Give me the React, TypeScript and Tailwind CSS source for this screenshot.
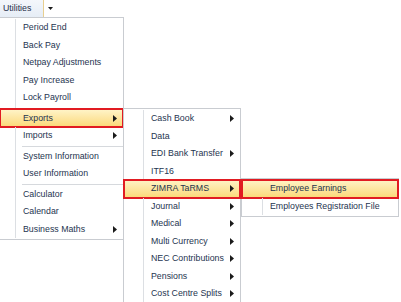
type Item = {
  label: string;
  arrow?: boolean;
  active?: boolean;
  sep?: boolean;
};

type MenuProps = {
  items: Item[];
  className: string;
  gutter: string;
};

const mainItems: Item[] = [
  { label: 'Period End' },
  { label: 'Back Pay' },
  { label: 'Netpay Adjustments' },
  { label: 'Pay Increase' },
  { label: 'Lock Payroll' },
  { label: '', sep: true },
  { label: 'Exports', arrow: true, active: true },
  { label: 'Imports', arrow: true },
  { label: '', sep: true },
  { label: 'System Information' },
  { label: 'User Information' },
  { label: '', sep: true },
  { label: 'Calculator' },
  { label: 'Calendar' },
  { label: 'Business Maths', arrow: true },
];

const exportItems: Item[] = [
  { label: 'Cash Book', arrow: true },
  { label: 'Data' },
  { label: 'EDI Bank Transfer', arrow: true },
  { label: 'ITF16' },
  { label: 'ZIMRA TaRMS', arrow: true, active: true },
  { label: 'Journal', arrow: true },
  { label: 'Medical', arrow: true },
  { label: 'Multi Currency', arrow: true },
  { label: 'NEC Contributions', arrow: true },
  { label: 'Pensions', arrow: true },
  { label: 'Cost Centre Splits', arrow: true },
];

const tarmsItems: Item[] = [
  { label: 'Employee Earnings', active: true },
  { label: 'Employees Registration File' },
];

function Arrow() {
  return (
    <svg width="4" height="7" viewBox="0 0 4 7" className="shrink-0">
      <polygon points="0,0 4,3.5 0,7" fill="#1b1b1b" />
    </svg>
  );
}

function Menu({ items, className, gutter }: MenuProps) {
  return (
    <div className={`absolute border border-[#c9ccd1] bg-white py-px ${className}`}>
      {items.map((item, i) => {
        if (item.sep) {
          return (
            <div key={i} className="flex h-[3px]">
              <div className={`${gutter} shrink-0 border-r border-[#dcdfe3]`} />
              <div className="flex flex-1 items-center pl-[6px]">
                <div className="h-px w-full bg-[#d6d9dd]" />
              </div>
            </div>
          );
        }
        return (
          <div
            key={i}
            className={`relative flex h-[17.5px] items-center ${
              item.active ? 'bg-gradient-to-b from-[#fff3c6] to-[#fbd875]' : ''
            }`}
          >
            <div
              className={`${gutter} h-full shrink-0 border-r ${
                item.active ? 'border-transparent' : 'border-[#dcdfe3]'
              }`}
            />
            <span className="flex-1 pl-[7px] whitespace-nowrap text-[#25344f]">{item.label}</span>
            {item.arrow && (
              <div className="pr-[6px]">
                <Arrow />
              </div>
            )}
            {item.active && (
              <div className="absolute -inset-x-px -top-[1.5px] -bottom-px border-2 border-[#e11b22]" />
            )}
          </div>
        );
      })}
    </div>
  );
}

export default function App() {
  return (
    <div
      className="relative h-[302px] w-[401px] overflow-hidden bg-white text-[8.8px] leading-none"
      style={{ fontFamily: '"Liberation Sans", Arial, sans-serif' }}
    >
      {/* Toolbar */}
      <div className="flex h-[17px]">
        <div className="flex w-[44px] items-center border-r border-[#e8cf8f] bg-gradient-to-b from-[#f4f7fb] to-[#e6edf6] pl-[3px] text-[#1f2f4a]">
          Utilities
        </div>
        <div className="flex w-[12px] items-center justify-center">
          <svg width="5" height="3" viewBox="0 0 5 3">
            <polygon points="0,0 5,0 2.5,3" fill="#1b1b1b" />
          </svg>
        </div>
      </div>

      <Menu items={mainItems} className="left-[-1px] top-[17px] w-[125px]" gutter="w-[16px]" />
      <Menu items={exportItems} className="left-[123px] top-[108px] w-[118px]" gutter="w-[20px]" />
      <Menu items={tarmsItems} className="left-[241px] top-[178px] w-[158px]" gutter="w-[21px]" />
    </div>
  );
}
